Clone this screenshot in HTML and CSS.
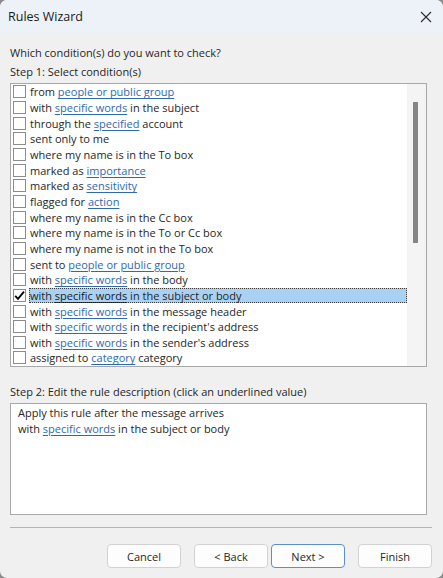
FILE: index.html
```html
<!DOCTYPE html>
<html lang="en">
<head>
<meta charset="utf-8">
<title>Rules Wizard</title>
<link rel="stylesheet" href="styles.css">
</head>
<body>
<div class="window">
  <div class="titlebar">
    <span class="title">Rules Wizard</span>
    <svg class="close" width="12" height="12" viewBox="0 0 12 12"><path d="M1 1 L11 11 M11 1 L1 11" stroke="#2b2b2b" stroke-width="1.1" fill="none"/></svg>
  </div>
  <div class="content">
    <div class="label first">Which condition(s) do you want to check?</div>
    <div class="label">Step 1: Select condition(s)</div>
    <div class="listbox">
      <ul class="items">
        <li class="row"><span class="cb"></span><span class="txt">from <a>people or public group</a></span></li>
        <li class="row"><span class="cb"></span><span class="txt">with <a>specific words</a> in the subject</span></li>
        <li class="row"><span class="cb"></span><span class="txt">through the <a>specified</a> account</span></li>
        <li class="row"><span class="cb"></span><span class="txt">sent only to me</span></li>
        <li class="row"><span class="cb"></span><span class="txt">where my name is in the To box</span></li>
        <li class="row"><span class="cb"></span><span class="txt">marked as <a>importance</a></span></li>
        <li class="row"><span class="cb"></span><span class="txt">marked as <a>sensitivity</a></span></li>
        <li class="row"><span class="cb"></span><span class="txt">flagged for <a>action</a></span></li>
        <li class="row"><span class="cb"></span><span class="txt">where my name is in the Cc box</span></li>
        <li class="row"><span class="cb"></span><span class="txt">where my name is in the To or Cc box</span></li>
        <li class="row"><span class="cb"></span><span class="txt">where my name is not in the To box</span></li>
        <li class="row"><span class="cb"></span><span class="txt">sent to <a>people or public group</a></span></li>
        <li class="row"><span class="cb"></span><span class="txt">with <a>specific words</a> in the body</span></li>
        <li class="row selected"><span class="cb checked"><svg width="13" height="13" viewBox="0 0 13 13"><path d="M2.2 6.8 L5 9.8 L11 2.6" stroke="#000" stroke-width="1.8" fill="none"/></svg></span><span class="txt">with <a>specific words</a> in the subject or body</span></li>
        <li class="row"><span class="cb"></span><span class="txt">with <a>specific words</a> in the message header</span></li>
        <li class="row"><span class="cb"></span><span class="txt">with <a>specific words</a> in the recipient's address</span></li>
        <li class="row"><span class="cb"></span><span class="txt">with <a>specific words</a> in the sender's address</span></li>
        <li class="row"><span class="cb"></span><span class="txt">assigned to <a>category</a> category</span></li>
      </ul>
      <div class="scrollbar"><div class="thumb"></div></div>
    </div>
    <div class="label step2">Step 2: Edit the rule description (click an underlined value)</div>
    <div class="desc">
      <div>Apply this rule after the message arrives</div>
      <div>with <a>specific words</a> in the subject or body</div>
    </div>
    <div class="sep"></div>
    <div class="buttons">
      <button class="btn">Cancel</button>
      <div class="pair">
        <button class="btn">&lt; Back</button>
        <button class="btn default">Next &gt;</button>
      </div>
      <button class="btn">Finish</button>
    </div>
  </div>
</div>
</body>
</html>
```

FILE: styles.css
```css
* { box-sizing: border-box; }
html, body { margin: 0; padding: 0; }
body {
  width: 443px;
  height: 578px;
  background: #8a8a8a;
  font-family: "Open Sans", "Noto Sans", sans-serif;
  font-size: 11px;
  color: #262626;
  overflow: hidden;
}
.window {
  width: 443px;
  height: 578px;
  background: #f0f0f0;
  border-radius: 7px;
  overflow: hidden;
  display: flex;
  flex-direction: column;
}
.titlebar {
  height: 33px;
  background: #edf1f8;
  display: flex;
  align-items: center;
  justify-content: space-between;
  padding: 0 11px 0 8px;
  flex-shrink: 0;
}
.title { font-size: 12.5px; color: #1a1a1a; }
.close { display: block; }
.content {
  padding: 12px 0 0 10px;
  display: flex;
  flex-direction: column;
}
.label { height: 16px; line-height: 16px; margin-top: 3px; white-space: nowrap; }
.label.first { margin-top: 0; }
.listbox {
  margin-top: 3px;
  width: 417px;
  height: 284px;
  border: 1px solid #a8a8a8;
  background: #fff;
  display: flex;
}
.items {
  list-style: none;
  margin: 0;
  padding: 0 0 0 2px;
  flex: 1;
  display: flex;
  flex-direction: column;
}
.row {
  height: 15.67px;
  display: flex;
  align-items: center;
  white-space: nowrap;
}
.cb {
  width: 13px;
  height: 13px;
  border: 1px solid #8c8c8c;
  background: #fff;
  flex-shrink: 0;
  margin-right: 3px;
  display: flex;
}
.cb svg { display: block; margin: -1px; }
.txt { line-height: 15px; padding: 0 1px; height: 15px; flex: 1; }
.selected .txt {
  background: #a9d1f3;
  outline: 1px dotted #3c3c3c;
  outline-offset: -1px;
}
.selected .txt a { color: #1a1a1a; text-decoration-color: #1a1a1a; }
a { color: #2e6aae; text-decoration: underline; text-underline-offset: 2px; }
.scrollbar {
  width: 19px;
  background: #f4f4f4;
  padding: 18px 0 0 6px;
  flex-shrink: 0;
}
.thumb { width: 5px; height: 141px; background: #858585; }
.step2 { margin-top: 17px; }
.desc {
  margin-top: 3px;
  width: 417px;
  height: 112px;
  border: 1px solid #a8a8a8;
  background: #fff;
  padding: 1px 0 0 7px;
  line-height: 16px;
}
.sep {
  margin-top: 12px;
  width: 422px;
  height: 1px;
  background: #b4b4b4;
}
.buttons {
  margin-top: 16px;
  margin-left: 97px;
  width: 325px;
  display: flex;
  justify-content: space-between;
}
.pair { display: flex; gap: 3px; }
.btn {
  width: 74px;
  height: 24px;
  border: 1px solid #d2d2d2;
  border-radius: 4px;
  background: #fdfdfd;
  font-family: "Open Sans", "Noto Sans", sans-serif;
  font-size: 11px;
  color: #262626;
  padding: 0;
}
.btn.default { border-color: #5b8fcf; }
```
